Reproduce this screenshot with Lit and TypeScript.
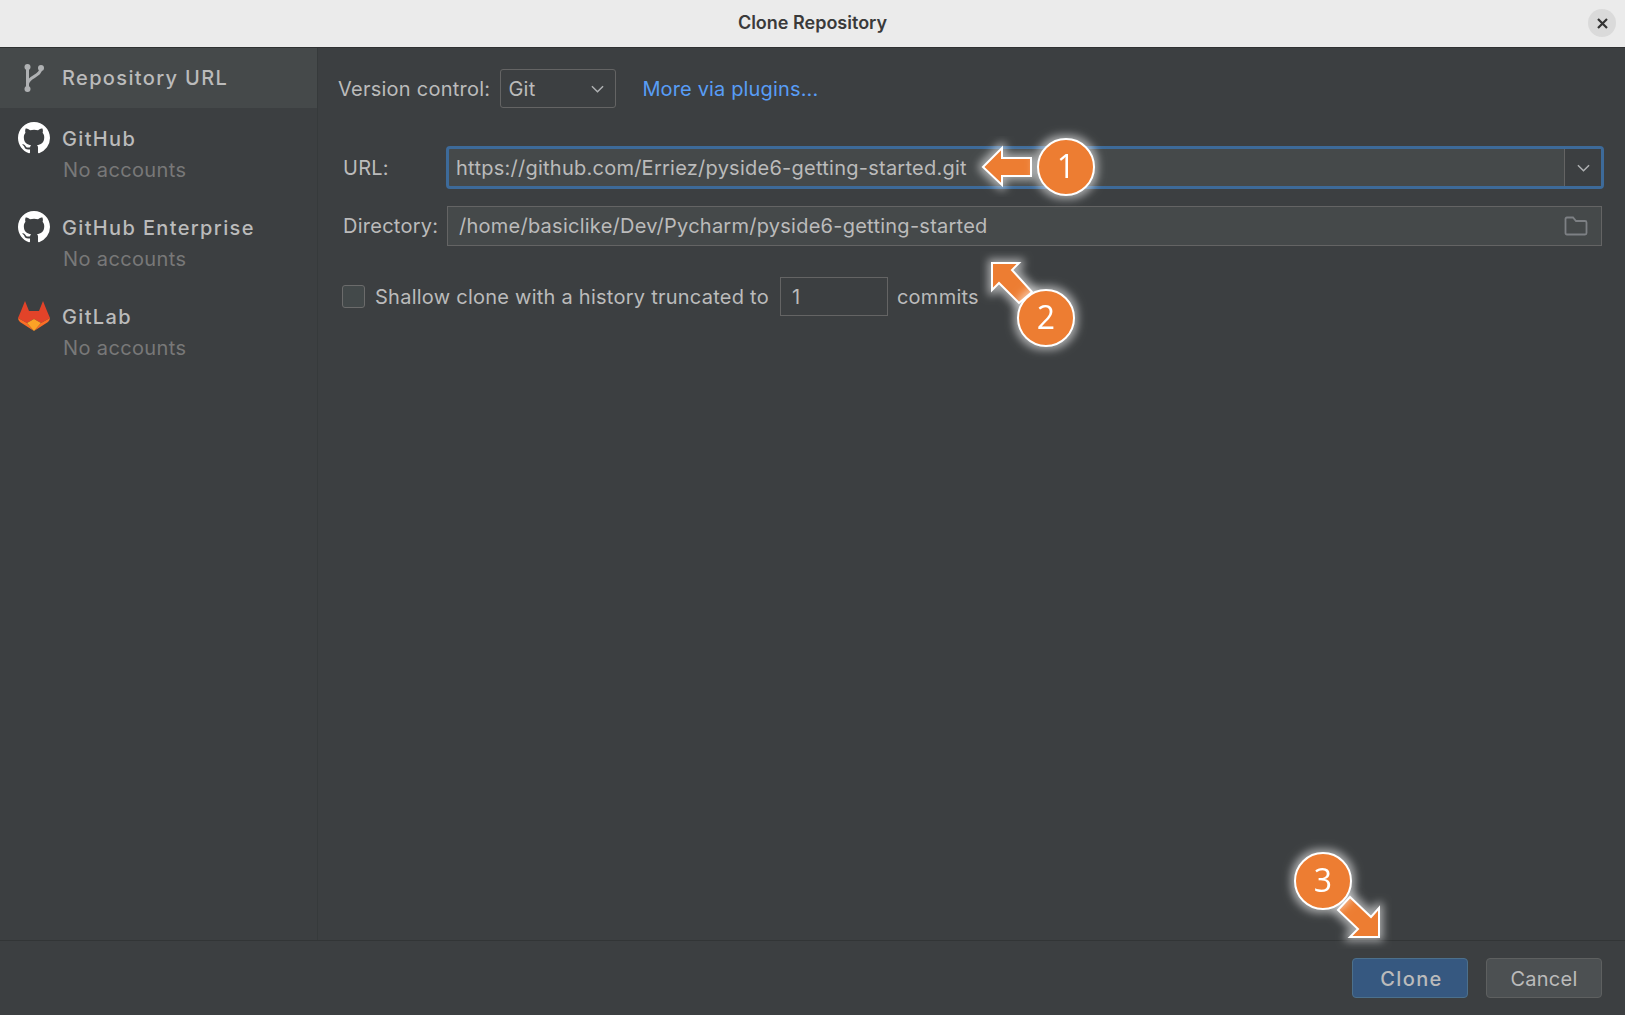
import { LitElement, css, html, svg } from "lit";
import { customElement } from "lit/decorators.js";

const GITHUB_PATH =
  "M8 0C3.58 0 0 3.58 0 8c0 3.54 2.29 6.53 5.47 7.59.4.07.55-.17.55-.38 0-.19-.01-.82-.01-1.49-2.01.37-2.53-.49-2.69-.94-.09-.23-.48-.94-.82-1.13-.28-.15-.68-.52-.01-.53.63-.01 1.08.58 1.23.82.72 1.21 1.87.87 2.33.66.07-.52.28-.87.51-1.07-1.78-.2-3.64-.89-3.64-3.95 0-.87.31-1.59.82-2.15-.08-.2-.36-1.02.08-2.12 0 0 .67-.21 2.2.82.64-.18 1.32-.27 2-.27.68 0 1.36.09 2 .27 1.53-1.04 2.2-.82 2.2-.82.44 1.1.16 1.92.08 2.12.51.56.82 1.27.82 2.15 0 3.07-1.87 3.75-3.65 3.95.29.25.54.73.54 1.48 0 1.07-.01 1.93-.01 2.2 0 .21.15.46.55.38A8.013 8.013 0 0016 8c0-4.42-3.58-8-8-8z";

const githubIcon = html`<svg class="ico" viewBox="0 0 16 16" fill="#fff"><path d=${GITHUB_PATH}></path></svg>`;

const gitlabIcon = html`<svg class="ico" viewBox="0 0 32 32">
  <path fill="#e24329" d="M7 1 L11 11 H21 L25 1 L29 11 L32 18 L23 23 L16 19 L9 23 L0 18 L3 11 Z"></path>
  <path fill="#fc6d26" d="M0 18 L9 23 L16 31 L2 22 Q0 20 0 18 Z M32 18 L23 23 L16 31 L30 22 Q32 20 32 18 Z"></path>
  <path fill="#fca326" d="M16 19 L23 23 L16 31 L9 23 Z"></path>
</svg>`;

const chevron = html`<svg class="chev" viewBox="0 0 14 8" fill="none" stroke="#afb1b3" stroke-width="1.6"><path d="M1 1 L7 7 L13 1"></path></svg>`;

@customElement("app-root")
export class AppRoot extends LitElement {
  static styles = css`
    :host {
      display: block;
      position: relative;
      width: 1625px;
      height: 1015px;
      overflow: hidden;
      background: #3c3f41;
      color: #bbbbbb;
      font-family: Inter, "Noto Sans", sans-serif;
      font-size: 20px;
      letter-spacing: 0.25px;
    }
    .title {
      height: 48px;
      display: flex;
      align-items: center;
      justify-content: center;
      position: relative;
      background: #ebebeb;
      border-bottom: 1px solid #2f3132;
      color: #3a3a3a;
      font-size: 18px;
      font-weight: 600;
      letter-spacing: 0;
      padding-bottom: 3px;
      box-sizing: border-box;
    }
    .close {
      position: absolute;
      right: 9px;
      top: 9px;
      width: 28px;
      height: 28px;
      border-radius: 50%;
      background: #dadada;
      display: flex;
      align-items: center;
      justify-content: center;
    }
    .close svg {
      width: 11px;
      height: 11px;
    }
    .body {
      display: flex;
      height: 892px;
      border-bottom: 1px solid #323536;
    }
    .side {
      width: 317px;
      flex: none;
      border-right: 1px solid #363a3b;
    }
    .item {
      display: flex;
      gap: 12px;
      padding: 0 0 0 18px;
      height: 89px;
    }
    .item.sel {
      height: 60px;
      background: #45494a;
      align-items: center;
      padding-left: 24px;
      gap: 18px;
    }
    .item .ico {
      margin-top: 14px;
    }
    .ico {
      width: 32px;
      height: 32px;
      flex: none;
    }
    .git {
      width: 20px;
      height: 30px;
      flex: none;
    }
    .name {
      font-weight: 500;
      letter-spacing: 1.35px;
      line-height: 24px;
      margin-top: 19px;
    }
    .sel .name {
      margin-top: 0;
    }
    .sub {
      color: #787878;
      line-height: 24px;
      margin-top: 7px;
      margin-left: 1px;
      letter-spacing: 0.37px;
    }
    .main {
      flex: 1;
      padding: 21px 23px 0 20px;
    }
    .vcs {
      display: flex;
      align-items: center;
      height: 39px;
    }
    .combo {
      width: 116px;
      height: 39px;
      box-sizing: border-box;
      margin-left: 10px;
      padding: 0 11px 0 7px;
      border: 1px solid #646464;
      border-radius: 3px;
      display: flex;
      align-items: center;
      justify-content: space-between;
    }
    .chev {
      width: 13px;
      height: 8px;
    }
    .link {
      color: #589df6;
      margin-left: 26px;
      letter-spacing: 0.15px;
    }
    .form {
      margin-top: 38px;
      margin-left: 5px;
      display: grid;
      grid-template-columns: 103px 1fr;
      row-gap: 17px;
      align-items: center;
    }
    .field {
      height: 40px;
      box-sizing: border-box;
      background: #45494a;
      border: 1px solid #646464;
      display: flex;
      align-items: center;
      padding-left: 11px;
      margin-left: 1px;
    }
    .field.focus {
      height: 43px;
      margin-left: 0;
      margin-right: -2px;
      border: 3px solid #3d6a99;
      border-radius: 4px;
      padding-left: 7px;
    }
    .field span {
      flex: 1;
    }
    .drop {
      width: 36px;
      align-self: stretch;
      flex: none;
      background: #3c3f41;
      border-left: 1px solid #646464;
      display: flex;
      align-items: center;
      justify-content: center;
    }
    .folder {
      width: 24px;
      height: 20px;
      margin-right: 13px;
      flex: none;
    }
    .shallow {
      display: flex;
      align-items: center;
      margin: 31px 0 0 4px;
      height: 39px;
    }
    .check {
      width: 23px;
      height: 23px;
      box-sizing: border-box;
      background: #43494a;
      border: 1px solid #6b6b6b;
      border-radius: 3px;
      margin-right: 10px;
    }
    .num {
      width: 108px;
      height: 39px;
      box-sizing: border-box;
      border: 1px solid #646464;
      margin: 0 9px 0 11px;
      padding-left: 11px;
      display: flex;
      align-items: center;
    }
    .foot {
      display: flex;
      justify-content: flex-end;
      gap: 18px;
      padding: 17px 23px 0 0;
    }
    .btn {
      width: 116px;
      height: 40px;
      box-sizing: border-box;
      border: 1px solid #5e6060;
      border-radius: 4px;
      background: #4c5052;
      display: flex;
      align-items: center;
      justify-content: center;
      padding-top: 1px;
    }
    .btn.primary {
      background: #365880;
      border-color: #4c708c;
      font-weight: 500;
      letter-spacing: 1.4px;
      padding-left: 3px;
    }
    .marks {
      position: absolute;
      left: 0;
      top: 0;
      width: 1625px;
      height: 1015px;
      pointer-events: none;
    }
    .marks text {
      font-family: "Open Sans", sans-serif;
      font-size: 32px;
      fill: #fff;
      text-anchor: middle;
      letter-spacing: 0;
    }
  `;

  // arrow first, so the halo of the circle falls over its tail
  private mark(cx: number, cy: number, n: string, arrow: string) {
    return svg`
      <polygon filter="url(#glow)" points=${arrow} fill="#ed7d31" stroke="#fff" stroke-width="2"></polygon>
      <g filter="url(#glow)">
        <circle cx=${cx} cy=${cy} r="28" fill="#ed7d31" stroke="#fff" stroke-width="2"></circle>
        <text x=${cx} y=${cy + 11}>${n}</text>
      </g>`;
  }

  render() {
    return html`
      <div class="title">
        Clone Repository
        <div class="close">
          <svg viewBox="0 0 11 11" stroke="#333" stroke-width="2.2" fill="none"><path d="M1 1 L10 10 M10 1 L1 10"></path></svg>
        </div>
      </div>
      <div class="body">
        <div class="side">
          <div class="item sel">
            <svg class="git" viewBox="0 0 20 30" fill="none" stroke="#afb1b3" stroke-width="3">
              <path d="M3.5 4 V26 M17 5 C17 14 4 13 3.5 21"></path>
              <circle cx="3.5" cy="4" r="3" fill="#afb1b3" stroke="none"></circle>
              <circle cx="17" cy="5" r="3" fill="#afb1b3" stroke="none"></circle>
              <circle cx="3.5" cy="26" r="3" fill="#afb1b3" stroke="none"></circle>
            </svg>
            <div class="name">Repository URL</div>
          </div>
          <div class="item">
            ${githubIcon}
            <div><div class="name">GitHub</div><div class="sub">No accounts</div></div>
          </div>
          <div class="item">
            ${githubIcon}
            <div><div class="name">GitHub Enterprise</div><div class="sub">No accounts</div></div>
          </div>
          <div class="item">
            ${gitlabIcon}
            <div><div class="name">GitLab</div><div class="sub">No accounts</div></div>
          </div>
        </div>
        <div class="main">
          <div class="vcs">
            Version control:
            <div class="combo">Git ${chevron}</div>
            <span class="link">More via plugins...</span>
          </div>
          <div class="form">
            <div>URL:</div>
            <div class="field focus">
              <span>https://github.com/Erriez/pyside6-getting-started.git</span>
              <div class="drop">${chevron}</div>
            </div>
            <div>Directory:</div>
            <div class="field">
              <span>/home/basiclike/Dev/Pycharm/pyside6-getting-started</span>
              <svg class="folder" viewBox="0 0 24 20" fill="none" stroke="#7d8084" stroke-width="1.8"><path d="M1.5 17 V3 Q1.5 1.5 3 1.5 H9 L12 5 H21 Q22.5 5 22.5 6.5 V17 Q22.5 18.5 21 18.5 H3 Q1.5 18.5 1.5 17 Z"></path></svg>
            </div>
          </div>
          <div class="shallow">
            <div class="check"></div>
            Shallow clone with a history truncated to
            <div class="num">1</div>
            commits
          </div>
        </div>
      </div>
      <div class="foot">
        <div class="btn primary">Clone</div>
        <div class="btn">Cancel</div>
      </div>
      <svg class="marks" viewBox="0 0 1625 1015">
        <defs>
          <filter id="glow" x="-30%" y="-30%" width="160%" height="160%">
            <feMorphology in="SourceAlpha" operator="dilate" radius="3" result="fat"></feMorphology>
            <feGaussianBlur in="fat" stdDeviation="4" result="blur"></feGaussianBlur>
            <feFlood flood-color="#fff" flood-opacity="0.55"></feFlood>
            <feComposite in2="blur" operator="in" result="halo"></feComposite>
            <feMerge><feMergeNode in="halo"></feMergeNode><feMergeNode in="SourceGraphic"></feMergeNode></feMerge>
          </filter>
        </defs>
        ${this.mark(1066, 167, "1", "983,167 1002,148 1002,158 1031,158 1031,176 1002,176 1002,185")}
        ${this.mark(1046, 318, "2", "992,263 1019,263 1012,270 1032,292 1019,303 999,283 992,290")}
        ${this.mark(1323, 881, "3", "1379,937 1350,937 1358,929 1338,910 1350,897 1371,917 1379,908")}
      </svg>
    `;
  }
}
